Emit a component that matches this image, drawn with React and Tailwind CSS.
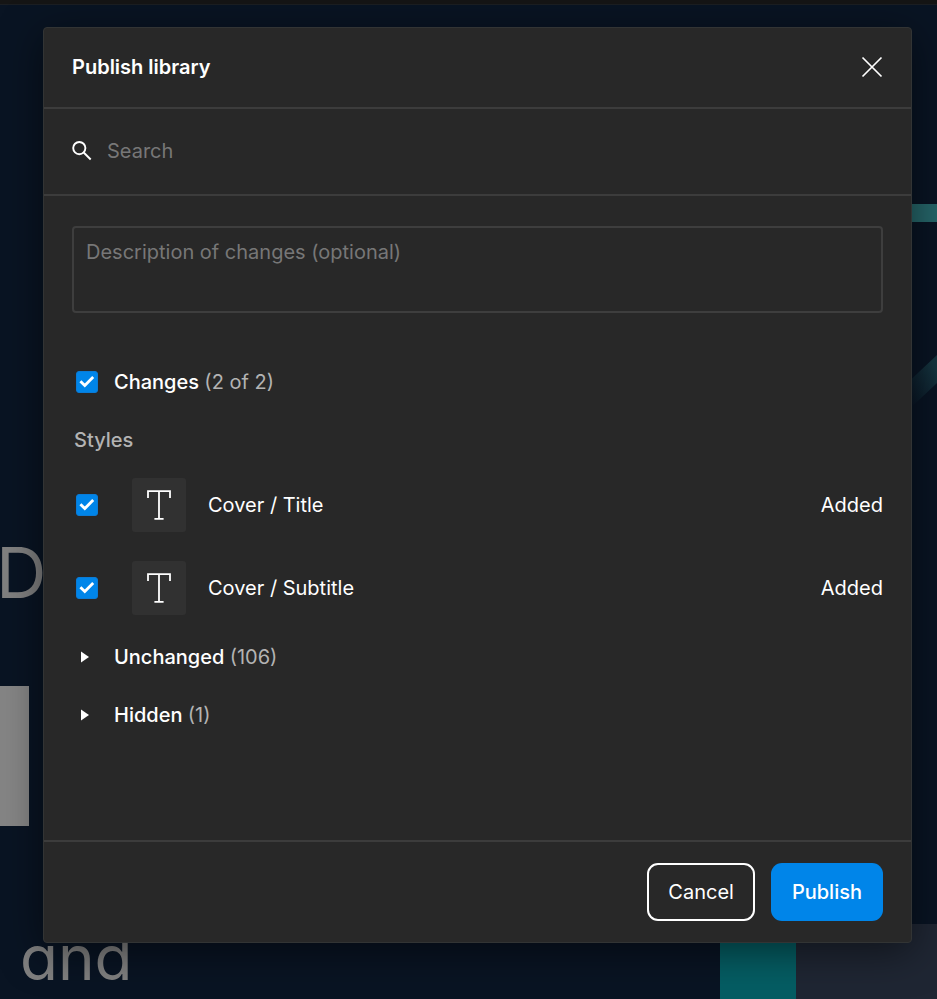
import { useState } from 'react';

const STYLES = [
  { id: 'title', name: 'Cover / Title', status: 'Added' },
  { id: 'subtitle', name: 'Cover / Subtitle', status: 'Added' },
];

const GROUPS = [
  { id: 'unchanged', name: 'Unchanged', count: 106 },
  { id: 'hidden', name: 'Hidden', count: 1 },
];

const Checkbox = ({ id, checked, onChange }) => (
  <span className="relative block size-[22px] shrink-0">
    <input id={id} type="checkbox" checked={checked} onChange={onChange}
      className="peer block size-[22px] appearance-none rounded-[3px] border border-[#777] checked:border-[#0a7bd6] checked:bg-[#0085e9]" />
    <svg viewBox="0 0 22 22" className="pointer-events-none absolute inset-0 hidden size-[22px] peer-checked:block" fill="none" stroke="#fff" strokeWidth="2.8">
      <path d="M4.4 10.2l4.4 4.4 8.4-8.6" />
    </svg>
  </span>
);

const TextStyleIcon = () => (
  <span className="flex size-[54px] shrink-0 items-center justify-center rounded-[3px] bg-[#313131]">
    <svg viewBox="0 0 26 32" className="h-8 w-[26px]" fill="none" stroke="#fff" strokeWidth="1.8">
      <path d="M2 9V2.2h22V9M13 2.2v27.6M8.4 29.9h9.2" />
    </svg>
  </span>
);

// Slide that lies behind the dialog
const Canvas = () => (
  <div aria-hidden="true" className="absolute inset-0 overflow-hidden border-t-4 border-[#151515] bg-[#091423]">
    <div className="h-px bg-[#1b1e22]" />
    <span className="absolute top-[527px] -left-1 text-[70px] leading-[84px] text-[#808080]">D</span>
    <div className="absolute top-[682px] left-0 h-[140px] w-[29px] bg-[#858585]" />
    <span className="absolute top-[916px] left-5 text-[62px] leading-[76px] text-[#808080] [font-feature-settings:'cv11']">and</span>
    <div className="absolute top-[200px] right-0 h-[18px] w-[60px] bg-[#256468]" />
    <svg viewBox="0 0 50 80" className="absolute top-[326px] right-0 h-20 w-[50px]">
      <defs>
        <linearGradient id="beam" x1="1" y1="0" x2="0" y2="1">
          <stop offset="0.1" stopColor="#15343f" />
          <stop offset="0.6" stopColor="#091423" />
        </linearGradient>
      </defs>
      <path d="M50 25L0 72v28l50-47z" fill="url(#beam)" />
    </svg>
    <div className="absolute top-[920px] right-0 bottom-0 w-[141px] bg-[#1f2633]" />
    <div className="absolute top-[920px] right-[141px] bottom-0 w-[76px] bg-[#055d63]" />
  </div>
);

const App = () => {
  const [selected, setSelected] = useState(['title', 'subtitle']);
  const [query, setQuery] = useState('');
  const [description, setDescription] = useState('');

  const allSelected = selected.length === STYLES.length;
  const toggleAll = () => setSelected(allSelected ? [] : STYLES.map(s => s.id));
  const toggle = (id) =>
    setSelected(prev => (prev.includes(id) ? prev.filter(s => s !== id) : [...prev, id]));

  return (
    <div className="relative flex min-h-screen flex-col pt-[27px] pr-[25px] pb-14 pl-[43px] font-['Inter',sans-serif] text-[20px] leading-[30px] text-white">
      <Canvas />

      <div role="dialog" aria-labelledby="dialog-title"
        className="relative flex flex-1 flex-col rounded-[4px] border border-[#323434] bg-[#282828] shadow-[0_8px_40px_rgba(0,0,0,0.5)]">
        <header className="flex items-center justify-between border-b-2 border-[#3c3c3c] px-7 pt-6 pb-[25px]">
          <h1 id="dialog-title" className="font-semibold">Publish library</h1>
          <button type="button" aria-label="Close">
            <svg viewBox="0 0 22 22" className="size-[22px]" fill="none" stroke="#fff" strokeWidth="1.7">
              <path d="M1.5 1.5l19 19M20.5 1.5l-19 19" />
            </svg>
          </button>
        </header>

        <div className="flex items-center gap-[15px] border-b-2 border-[#3c3c3c] px-7 pt-[27px] pb-7">
          <svg viewBox="0 0 20 20" className="size-5 shrink-0" fill="none" stroke="#fff" strokeWidth="1.9">
            <circle cx="7.3" cy="7.1" r="6.1" />
            <path d="M11.7 11.5l7 7" />
          </svg>
          <input type="search" aria-label="Search" placeholder="Search" value={query} onChange={e => setQuery(e.target.value)}
            className="h-[30px] w-full bg-transparent outline-none placeholder:text-[#777]" />
        </div>

        <main className="flex-1 px-7 pt-[30px]">
          <textarea aria-label="Description of changes" placeholder="Description of changes (optional)"
            value={description} onChange={e => setDescription(e.target.value)}
            className="block h-[87px] w-full resize-none rounded-[4px] border-2 border-[#3e3e3e] bg-transparent px-3 py-[9px] outline-none placeholder:text-[#777]" />

          <div className="mt-10 flex h-[58px] items-center gap-4 pl-1">
            <Checkbox id="all" checked={allSelected} onChange={toggleAll} />
            <label htmlFor="all" className="font-medium">
              Changes <span className="font-normal text-[#b3b3b3]">({selected.length} of {STYLES.length})</span>
            </label>
          </div>

          <h2 className="flex h-[58px] items-center pl-[2px] font-medium text-[#b3b3b3]">Styles</h2>
          <ul className="flex flex-col gap-[29px] pt-[9px] pb-[13px]">
            {STYLES.map(style => (
              <li key={style.id} className="flex items-center pl-1">
                <Checkbox id={style.id} checked={selected.includes(style.id)} onChange={() => toggle(style.id)} />
                <label htmlFor={style.id} className="ml-[34px] flex flex-1 items-center gap-[22px]">
                  <TextStyleIcon />
                  {style.name}
                </label>
                <span>{style.status}</span>
              </li>
            ))}
          </ul>

          {GROUPS.map(group => (
            <button key={group.id} type="button" className="flex h-[58px] w-full items-center gap-6 pl-2 text-left">
              <svg viewBox="0 0 10 12" className="h-3 w-[10px]" fill="#fff">
                <path d="M1 .5v11l8-5.5z" />
              </svg>
              <span className="font-medium">
                {group.name} <span className="font-normal text-[#b3b3b3]">({group.count})</span>
              </span>
            </button>
          ))}
        </main>

        <footer className="flex justify-end gap-4 border-t-2 border-[#3c3c3c] px-7 py-[21px]">
          <button type="button" className="h-[58px] rounded-[11px] border-2 border-white px-[19px]">Cancel</button>
          <button type="button" className="h-[58px] rounded-[11px] bg-[#0085e9] px-[21px] font-medium">Publish</button>
        </footer>
      </div>
    </div>
  );
};

export default App;
